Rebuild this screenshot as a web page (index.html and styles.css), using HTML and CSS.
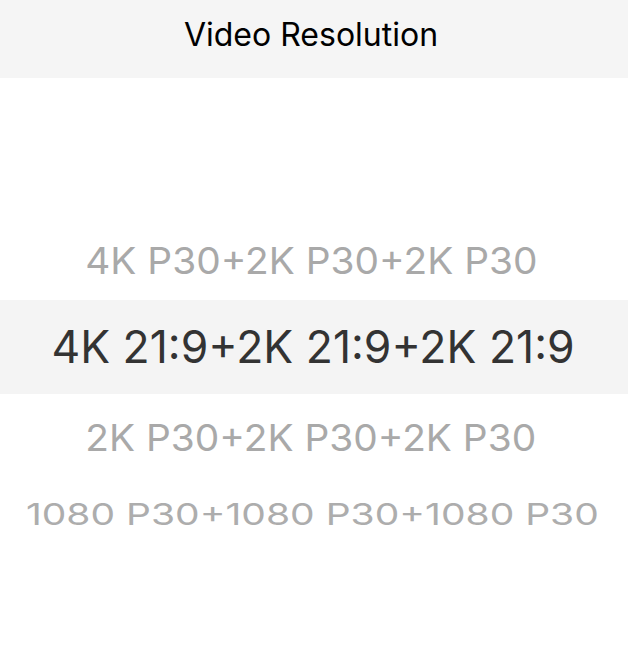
FILE: index.html
```html
<!DOCTYPE html>
<html>
<head>
<meta charset="utf-8">
<link rel="stylesheet" href="styles.css">
</head>
<body>
<div class="header"><span class="title">Video Resolution</span></div>
<div class="picker">
  <div class="row r1"><span class="label">4K P30+2K P30+2K P30</span></div>
  <div class="row selected"><span class="label">4K 21:9+2K 21:9+2K 21:9</span></div>
  <div class="row r3"><span class="label">2K P30+2K P30+2K P30</span></div>
  <div class="row r4"><span class="label">1080 P30+1080 P30+1080 P30</span></div>
</div>
</body>
</html>
```
FILE: styles.css
```css
html, body { margin: 0; padding: 0; background: #fff; }
body { width: 628px; height: 663px; overflow: hidden; font-family: Inter, Roboto, "Liberation Sans", sans-serif; }
.header { height: 78px; background: #f5f5f5; display: flex; justify-content: center; align-items: center; }
.title { font-size: 32px; color: #000; margin-top: -10px; margin-right: 6px; }
.picker { padding-top: 142px; display: flex; flex-direction: column; }
.row { display: flex; justify-content: center; align-items: center; white-space: nowrap; color: #a9a9a9; }
.label { display: inline-block; }
.r1 { height: 80px; font-size: 37px; }
.r1 .label, .r3 .label { transform: scaleX(1.05); margin-right: 6px; }
.selected { height: 94px; font-size: 44.5px; color: #333333; background: #f4f4f4; }
.selected .label { margin-right: 2px; }
.r3 { height: 86px; font-size: 37px; }
.r4 { height: 68px; font-size: 30px; color: #adadad; }
.r4 .label { transform: scaleX(1.3); margin-right: 4px; }
```
